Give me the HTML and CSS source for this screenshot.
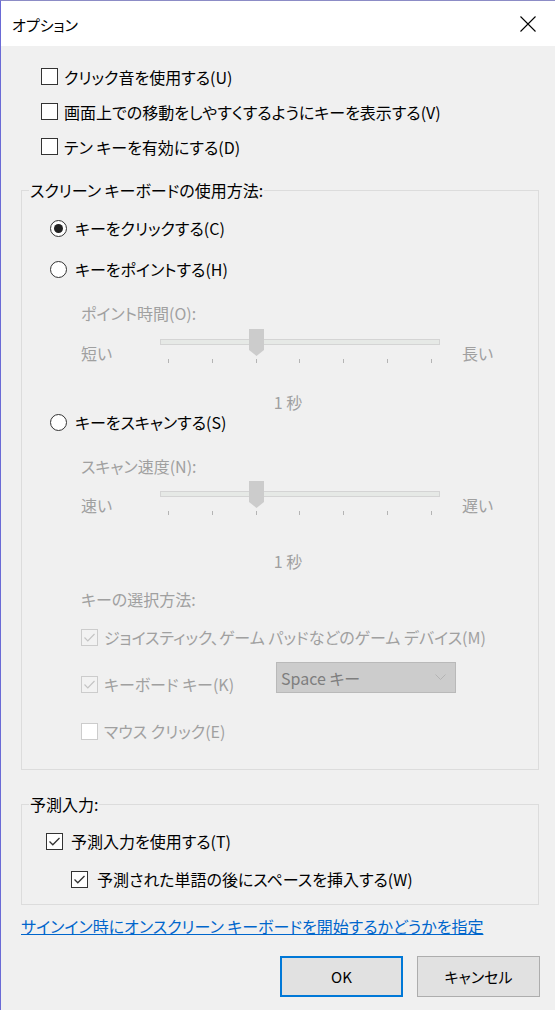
FILE: index.html
```html
<!DOCTYPE html>
<html lang="ja">
<head>
<meta charset="utf-8">
<title>オプション</title>
<link rel="stylesheet" href="styles.css">
</head>
<body>
<div class="window">
  <header class="titlebar">
    <span class="title">オプション</span>
    <span class="close" aria-label="閉じる">
      <svg width="16" height="16" viewBox="0 0 16 16"><path d="M0.5 0.5 L15.5 15.5 M15.5 0.5 L0.5 15.5" stroke="#000" stroke-width="1.1" fill="none"/></svg>
    </span>
  </header>

  <main class="content">
    <div class="top-checks">
      <div class="check-row"><span class="box"></span><span>クリック音を使用する(U)</span></div>
      <div class="check-row"><span class="box"></span><span>画面上での移動をしやすくするようにキーを表示する(V)</span></div>
      <div class="check-row"><span class="box"></span><span>テン キーを有効にする(D)</span></div>
    </div>

    <fieldset class="group group-osk">
      <legend>スクリーン キーボードの使用方法:</legend>

      <div class="radio-row r1"><span class="radio checked"><span class="dot"></span></span><span>キーをクリックする(C)</span></div>
      <div class="radio-row r2"><span class="radio"></span><span>キーをポイントする(H)</span></div>

      <div class="sub">
        <div class="sub-label point-label">ポイント時間(O):</div>
        <div class="slider-row">
          <span class="end end-left">短い</span>
          <div class="slider">
            <div class="track"></div>
            <svg class="thumb" width="15" height="27" viewBox="0 0 15 27"><polygon points="0,0 15,0 15,21 7.5,27 0,21" fill="#cccccc"/></svg>
            <div class="ticks"><i></i><i></i><i></i><i></i><i></i><i></i><i></i></div>
          </div>
          <span class="end end-right">長い</span>
        </div>
        <div class="value v1">1 秒</div>
      </div>

      <div class="radio-row r3"><span class="radio"></span><span>キーをスキャンする(S)</span></div>

      <div class="sub">
        <div class="sub-label scan-label">スキャン速度(N):</div>
        <div class="slider-row s2">
          <span class="end end-left">速い</span>
          <div class="slider">
            <div class="track"></div>
            <svg class="thumb" width="15" height="27" viewBox="0 0 15 27"><polygon points="0,0 15,0 15,21 7.5,27 0,21" fill="#cccccc"/></svg>
            <div class="ticks"><i></i><i></i><i></i><i></i><i></i><i></i><i></i></div>
          </div>
          <span class="end end-right">遅い</span>
        </div>
        <div class="value v2">1 秒</div>

        <div class="sub-label select-label">キーの選択方法:</div>
        <div class="check-row dis joy">
          <span class="box dis-box checked-dis"><svg width="13" height="13" viewBox="0 0 13 13"><path d="M1.5 6.5 L4.8 9.8 L11.5 3" stroke="#c4c4c4" stroke-width="1.2" fill="none"/></svg></span>
          <span>ジョイスティック、ゲーム パッドなどのゲーム デバイス(M)</span>
        </div>
        <div class="kb-row">
          <div class="check-row dis kb-label">
            <span class="box dis-box checked-dis"><svg width="13" height="13" viewBox="0 0 13 13"><path d="M1.5 6.5 L4.8 9.8 L11.5 3" stroke="#c4c4c4" stroke-width="1.2" fill="none"/></svg></span>
            <span>キーボード キー(K)</span>
          </div>
          <div class="select">
            <span>Space キー</span>
            <svg width="11" height="7" viewBox="0 0 11 7"><path d="M0.5 0.5 L5.5 5.5 L10.5 0.5" stroke="#b4b4b4" stroke-width="1" fill="none"/></svg>
          </div>
        </div>
        <div class="check-row dis mouse">
          <span class="box dis-box"></span>
          <span>マウス クリック(E)</span>
        </div>
      </div>
    </fieldset>

    <fieldset class="group group-predict">
      <legend>予測入力:</legend>
      <div class="check-row p1">
        <span class="box"><svg width="13" height="13" viewBox="0 0 13 13"><path d="M1.5 6.5 L4.8 9.8 L11.5 3" stroke="#333" stroke-width="1.3" fill="none"/></svg></span>
        <span>予測入力を使用する(T)</span>
      </div>
      <div class="check-row p2">
        <span class="box"><svg width="13" height="13" viewBox="0 0 13 13"><path d="M1.5 6.5 L4.8 9.8 L11.5 3" stroke="#333" stroke-width="1.3" fill="none"/></svg></span>
        <span>予測された単語の後にスペースを挿入する(W)</span>
      </div>
    </fieldset>

    <a class="link" href="#">サインイン時にオンスクリーン キーボードを開始するかどうかを指定</a>

    <div class="buttons">
      <button class="btn btn-default" type="button">OK</button>
      <button class="btn" type="button">キャンセル</button>
    </div>
  </main>
</div>
</body>
</html>
```

FILE: styles.css
```css
* { box-sizing: border-box; }

html, body {
  margin: 0;
  padding: 0;
}

body {
  width: 555px;
  height: 1010px;
  overflow: hidden;
  background: #f0f0f0;
  font-family: "Noto Sans CJK JP", "Noto Sans", sans-serif;
  font-size: 16px;
  color: #000;
  font-feature-settings: "palt";
}

.window {
  height: 1010px;
  border-left: 1px solid #6a6ad6;
  border-top: 1px solid #8c8cc6;
  background: #f0f0f0;
  display: flex;
  flex-direction: column;
}

.titlebar {
  height: 45px;
  flex: none;
  background: #fff;
  display: flex;
  align-items: center;
  justify-content: space-between;
  padding: 0 19px 0 11px;
}

.title {
  font-size: 15px;
  line-height: 20px;
  margin-top: 2px;
}

.close {
  width: 16px;
  height: 16px;
  display: flex;
}

.content {
  display: flex;
  flex-direction: column;
  padding: 13px 16px 0 20px;
}

/* checkbox rows */
.check-row {
  display: flex;
  align-items: center;
  gap: 6px;
  height: 20px;
  line-height: 20px;
  white-space: nowrap;
}

.top-checks {
  margin-left: 20px;
}

.top-checks .check-row {
  height: 35px;
}

.box {
  width: 17px;
  height: 17px;
  flex: none;
  border: 1px solid #333;
  background: #fff;
  display: flex;
  align-items: center;
  justify-content: center;
}

.dis {
  color: #a0a0a0;
}

.dis-box {
  border-color: #cccccc;
}

.checked-dis {
  background: #f2f2f2;
}

/* group boxes */
.group {
  margin: 16px 0 0;
  padding: 0 0 28px;
  border: 1px solid #dcdcdc;
  min-width: 0;
}

.group legend {
  margin-left: 7px;
  padding: 0 1px;
  line-height: 20px;
}

/* radios */
.radio-row {
  display: flex;
  align-items: center;
  gap: 8px;
  height: 20px;
  line-height: 20px;
  margin-left: 28px;
  white-space: nowrap;
}

.r1 { margin-top: 18px; }
.r2 { margin-top: 21px; }
.r3 { margin-top: 0; }

.radio {
  width: 17px;
  height: 17px;
  flex: none;
  border: 1px solid #333;
  border-radius: 50%;
  background: #fff;
  display: flex;
  align-items: center;
  justify-content: center;
}

.radio .dot {
  width: 9px;
  height: 9px;
  border-radius: 50%;
  background: #222;
}

/* disabled sub-blocks */
.sub {
  margin-left: 59px;
  width: 414px;
  color: #a0a0a0;
}

.sub-label {
  line-height: 20px;
  height: 20px;
  white-space: nowrap;
}

.point-label { margin-top: 24px; }
.scan-label { margin-top: 24px; }
.select-label { margin-top: 18px; }

.slider-row {
  display: flex;
  height: 36px;
  margin-top: 4px;
}

.slider-row.s2 {
  margin-top: 3px;
}

.end {
  line-height: 20px;
  margin-top: 16px;
}

.end-left {
  width: 79px;
}

.end-right {
  margin-left: 22px;
}

.slider {
  width: 280px;
  height: 36px;
  padding-top: 12px;
  position: relative;
}

.track {
  height: 6px;
  background: #e6e9e6;
  border: 1px solid #d4d4d4;
}

.thumb {
  position: absolute;
  left: 89px;
  top: 2px;
}

.ticks {
  display: flex;
  justify-content: space-between;
  padding: 0 8px;
  margin-top: 14px;
  height: 4px;
}

.ticks i {
  width: 1px;
  height: 4px;
  background: #b4b4b4;
}

.value {
  text-align: center;
  line-height: 20px;
  height: 20px;
}

.v1 { margin-top: 29px; }
.v2 { margin-top: 36px; }

.joy { margin-top: 18px; }

.kb-row {
  display: flex;
  align-items: flex-end;
  margin-top: 15px;
  height: 32px;
}

.kb-label {
  width: 195px;
}

.select {
  width: 180px;
  height: 31px;
  margin-bottom: 1px;
  background: #cccccc;
  border: 1px solid #b9b9b9;
  color: #7e7e7e;
  display: flex;
  align-items: center;
  justify-content: space-between;
  padding: 0 9px 0 4px;
  line-height: 20px;
}

.mouse { margin-top: 27px; }

/* predict group */
.group-predict {
  margin-top: 24px;
  padding-bottom: 15px;
}

.p1 {
  margin-top: 17px;
  margin-left: 24px;
  gap: 8px;
}

.p2 {
  margin-top: 18px;
  margin-left: 49px;
  gap: 9px;
}

.link {
  align-self: flex-start;
  margin-top: 11px;
  line-height: 20px;
  color: #0066cc;
  text-decoration: underline;
  white-space: nowrap;
}

.buttons {
  display: flex;
  justify-content: flex-end;
  gap: 14px;
  margin-top: 20px;
  margin-right: -1px;
}

.btn {
  width: 123px;
  height: 41px;
  background: #e1e1e1;
  border: 1px solid #adadad;
  font-family: inherit;
  font-size: 15px;
  color: #000;
  padding: 0;
  font-feature-settings: "palt";
}

.btn-default {
  border: 2px solid #0078d7;
}
```
